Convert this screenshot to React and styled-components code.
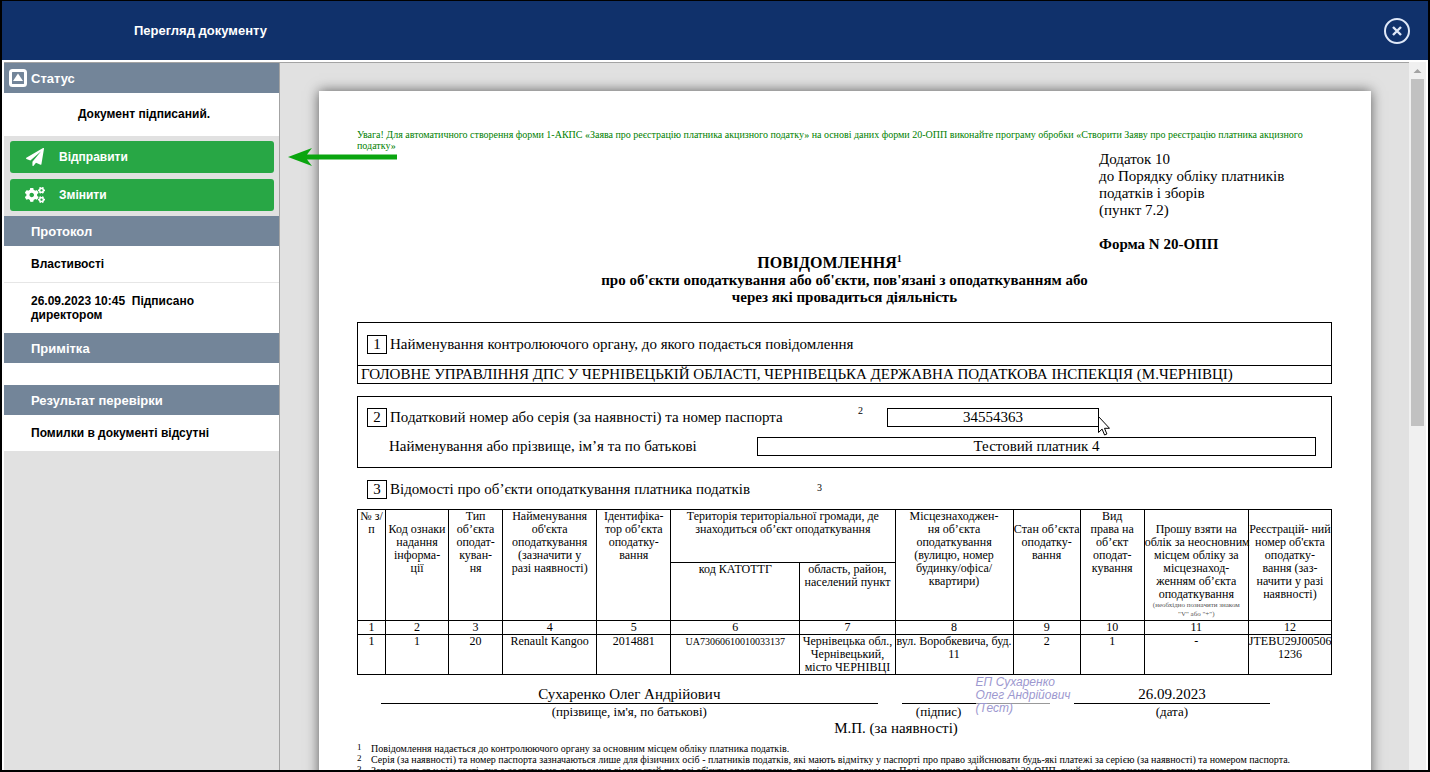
import React from 'react';
import styled, { createGlobalStyle } from 'styled-components';
import { FaCogs } from 'react-icons/fa';

const GlobalStyle = createGlobalStyle`
  * {
    box-sizing: border-box;
  }

  body {
    margin: 0;
    background: #000;
    font-family: 'Liberation Sans', Arial, sans-serif;
  }
`;

const Window = styled.div`
  display: flex;
  flex-direction: column;
  height: 100vh;
  overflow: hidden;
  border: solid #000;
  border-width: 1px 2px 2px;
  background: #fff;
`;

const Header = styled.header`
  display: flex;
  flex: none;
  align-items: center;
  justify-content: space-between;
  height: 59px;
  padding: 0 17px 0 132px;
  background: #10316b;

  h1 {
    margin: 0;
    color: #fff;
    font-size: 13px;
    font-weight: bold;
  }
`;

const CloseButton = styled.button`
  display: flex;
  padding: 0;
  border: none;
  background: none;
  cursor: pointer;
`;

const Body = styled.div`
  display: flex;
  flex: 1;
  min-height: 0;
  padding: 2px 2px 0;
`;

const Sidebar = styled.aside`
  flex: none;
  width: 276px;
  border-top: 1px solid #a3a3a3;
  border-right: 1px solid #a3a3a3;
  background: #e1e1e1;
  font-size: 12px;
  font-weight: bold;
`;

const SectionTitle = styled.h2`
  display: flex;
  align-items: center;
  gap: 4px;
  height: 30px;
  margin: 0;
  padding-left: ${(props) => (props.$icon ? '5px' : '27px')};
  background: #738599;
  color: #fff;
  font-size: 13px;
`;

const SidebarText = styled.div`
  min-height: ${(props) => (props.$empty ? '22px' : '36px')};
  padding: ${(props) => (props.$empty ? '0' : '11px 60px 11px 27px')};
  background: #fff;
  line-height: 14px;

  & + & {
    border-top: 1px solid #e6e6e6;
  }
`;

const StatusText = styled.div`
  padding: 14px 0 15px 5px;
  background: #fff;
  line-height: 14px;
  text-align: center;
`;

const Actions = styled.div`
  display: flex;
  flex-direction: column;
  gap: 6px;
  padding: 5px 5px 5px 6px;
`;

const ActionButton = styled.button`
  display: flex;
  align-items: center;
  gap: 14px;
  height: 32px;
  padding: 0 15px;
  border: none;
  border-radius: 3px;
  background: #28a745;
  color: #fff;
  font-family: inherit;
  font-size: 12px;
  font-weight: bold;
  cursor: pointer;

  svg {
    width: 20px;
    height: 18px;
  }
`;

const Viewer = styled.main`
  position: relative;
  flex: 1;
  min-width: 0;
  overflow: hidden;
  padding: 28px 38px 0 39px;
  border-top: 1px solid #a3a3a3;
  background: #e1e1e1;
`;

const PointerArrow = styled.svg`
  position: absolute;
  top: 85px;
  left: 8px;
`;

const Scrollbar = styled.div`
  flex: none;
  width: 17px;
  padding: 0 2px;
  background: #f0f0f0;

  svg {
    display: block;
    width: 13px;
    height: 17px;
  }
`;

const ScrollThumb = styled.div`
  height: 49%;
  background: #c1c1c1;
`;

const Paper = styled.article`
  min-height: 900px;
  padding: 38px 39px 0 38px;
  background: #fff;
  box-shadow: 0 0 12px rgba(0, 0, 0, 0.6);
  color: #000;
  font-family: 'Liberation Serif', 'Times New Roman', serif;
  font-size: 15px;
  line-height: 17px;
`;

const Notice = styled.p`
  margin: 0;
  color: #008000;
  font-size: 10px;
  line-height: 11px;
`;

const FormInfo = styled.div`
  width: 233px;
  margin-left: auto;

  p {
    margin: 0;
  }

  p:last-child {
    margin-top: 17px;
    font-weight: bold;
  }
`;

const Title = styled.div`
  padding-top: 1px;
  margin-bottom: 16px;
  font-weight: bold;
  text-align: center;

  h3 {
    margin: 0;
    padding-right: 30px;
    font-size: 16px;
    line-height: 18px;
  }

  p {
    margin: 0;
  }

  sup {
    font-size: 10px;
    line-height: 0;
  }
`;

const Box = styled.section`
  margin-bottom: 12px;
  border: 1px solid #000;
`;

const Row = styled.div`
  display: flex;
  align-items: center;
  gap: 3px;
  padding-left: 9px;
`;

const OfficeRow = styled(Row)`
  height: 42px;
`;

const OfficeName = styled.div`
  padding-left: 3px;
  border-top: 1px solid #000;
`;

const PayerRow = styled(Row)`
  height: 29px;
  padding-right: 15px;
`;

const Payer = styled(Box)`
  padding: 6px 0;
`;

const ObjectsRow = styled(Row)`
  padding-left: 10px;
`;

const Num = styled.span`
  flex: none;
  width: 20px;
  border: 1px solid #000;
  text-align: center;
`;

const Label = styled.span`
  flex: none;
  width: ${(props) => props.$width};
  margin-left: ${(props) => (props.$indent ? '22px' : '0')};
`;

const Ref = styled.sup`
  flex: none;
  width: 26px;
  font-size: 10px;
  line-height: 15px;
  vertical-align: baseline;
  align-self: flex-start;
`;

const Value = styled.div`
  position: relative;
  flex: ${(props) => (props.$width ? 'none' : 1)};
  width: ${(props) => props.$width};
  border: 1px solid #000;
  text-align: center;
`;

const Cursor = styled.svg`
  position: absolute;
  top: 7px;
  left: 100%;
`;

const Table = styled.table`
  width: 100%;
  margin-top: 10px;
  border-collapse: collapse;
  table-layout: fixed;
  font-size: 12px;
  line-height: 13px;
  text-align: center;

  th,
  td {
    padding: 0;
    border: 1px solid #000;
    font-weight: normal;
    vertical-align: top;
    white-space: pre;
  }

  small {
    display: block;
    color: #555;
    font-size: 7px;
    line-height: 9px;
  }
`;

const HeadRow = styled.tr`
  height: ${(props) => props.$height};
`;

const Code = styled.span`
  font-size: 10px;
`;

const Signatures = styled.div`
  display: flex;
  gap: 24px;
  padding: 11px 62px 0 24px;
`;

const Signature = styled.div`
  position: relative;
  flex: ${(props) => props.$grow};
  font-size: 13px;
  line-height: 15px;
  text-align: center;

  div {
    height: 18px;
    border-bottom: 1px solid #000;
    font-size: 15px;
    line-height: 17px;
  }
`;

const SignLabel = styled.span`
  display: block;
  width: 50%;
`;

const Stamp = styled.p`
  position: absolute;
  top: -10px;
  left: 74px;
  margin: 0;
  background: rgba(255, 255, 255, 0.6);
  color: #9d98cf;
  font-family: 'Liberation Sans', Arial, sans-serif;
  font-size: 12px;
  font-style: italic;
  line-height: 13px;
  text-align: left;
  white-space: pre;
`;

const Seal = styled.p`
  margin: 1px 0 6px;
  padding-left: 103px;
  text-align: center;
`;

const Footnotes = styled.ol`
  margin: 0;
  padding: 0;
  font-size: 10px;
  line-height: 11px;
  list-style: none;

  li {
    display: flex;
    white-space: nowrap;
  }

  sup {
    width: 14px;
    font-size: 9px;
    line-height: 9px;
  }
`;

const columns = [28, 63, 54, 94, 74, 129, 95, 118, 67, 64, 104, 83];

const headBefore = [
  '№ з/\nп',
  '\nКод ознаки\nнадання\nінформа-\nції',
  'Тип\nоб’єкта\nоподат-\nкуван-\nня',
  "Найменування\nоб'єкта\nоподаткування\n(зазначити у\nразі наявності)",
  'Ідентифіка-\nтор об’єкта\nоподатку-\nвання',
];

const headAfter = [
  'Місцезнаходжен-\nня об’єкта\nоподаткування\n(вулицю, номер\nбудинку/офіса/\nквартири)',
  '\nСтан об’єкта\nоподатку-\nвання',
  'Вид\nправа на\nоб’єкт\nоподат-\nкування',
];

const footnotes = [
  'Повідомлення надається до контролюючого органу за основним місцем обліку платника податків.',
  'Серія (за наявності) та номер паспорта зазначаються лише для фізичних осіб - платників податків, які мають відмітку у паспорті про право здійснювати будь-які платежі за серією (за наявності) та номером паспорта.',
  "Заповнюється у кількості, яка є достатньою для надання відомостей про всі об'єкти оподаткування, та згідно з порядком до Повідомлення за формою N 20-ОПП, який до контролюючого органу не подається.",
];

function StatusSidebar() {
  return (
    <Sidebar>
      <SectionTitle $icon>
        <svg width='18' height='18' viewBox='0 0 18 18'>
          <rect x='1.5' y='1.5' width='15' height='15' rx='2' fill='none' stroke='#fff' strokeWidth='3' />
          <path d='M9 4.5 14 12H4z' fill='#fff' />
        </svg>
        Статус
      </SectionTitle>
      <StatusText>Документ підписаний.</StatusText>
      <Actions>
        <ActionButton type='button'>
          <svg viewBox='0 0 1792 1792' fill='currentColor'>
            <path d='M1764 11q33 24 27 64l-256 1536q-5 29-32 45-14 8-31 8-11 0-24-5l-453-185-242 295q-18 23-49 23-13 0-22-4-19-7-30.500-23.500t-11.500-36.500v-349l864-1059-1069 925-395-162q-37-14-40-55-2-40 32-59l1664-960q15-9 32-9 20 0 36 11z' />
          </svg>
          Відправити
        </ActionButton>
        <ActionButton type='button'>
          <FaCogs />
          Змінити
        </ActionButton>
      </Actions>
      <SectionTitle>Протокол</SectionTitle>
      <SidebarText>Властивості</SidebarText>
      <SidebarText>26.09.2023 10:45&nbsp; Підписано директором</SidebarText>
      <SectionTitle>Примітка</SectionTitle>
      <SidebarText $empty />
      <SectionTitle>Результат перевірки</SectionTitle>
      <SidebarText>Помилки в документі відсутні</SidebarText>
    </Sidebar>
  );
}

function ObjectsTable() {
  return (
    <Table>
      <colgroup>
        {columns.map((width, i) => (
          <col key={i} width={width} />
        ))}
      </colgroup>
      <thead>
        <HeadRow $height='53px'>
          {headBefore.map((text) => (
            <th key={text} rowSpan={2}>
              {text}
            </th>
          ))}
          <th colSpan={2}>{'Територія територіальної громади, де\nзнаходиться об’єкт оподаткування'}</th>
          {headAfter.map((text) => (
            <th key={text} rowSpan={2}>
              {text}
            </th>
          ))}
          <th rowSpan={2}>
            {'\nПрошу взяти на\nоблік за неосновним\nмісцем обліку за\nмісцезнаход-\nженням об’єкта\nоподаткування'}
            <small>{'(необхідно позначити знаком\n"V" або "+")'}</small>
          </th>
          <th rowSpan={2}>{"\nРеєстрацій- ний\nномер об'єкта\nоподатку-\nвання (заз-\nначити у разі\nнаявності)"}</th>
        </HeadRow>
        <HeadRow $height='58px'>
          <th>код КАТОТТГ</th>
          <th>{'область, район,\nнаселений пункт'}</th>
        </HeadRow>
        <tr>
          {columns.map((width, i) => (
            <th key={i}>{i + 1}</th>
          ))}
        </tr>
      </thead>
      <tbody>
        <tr>
          <td>1</td>
          <td>1</td>
          <td>20</td>
          <td>Renault Kangoo</td>
          <td>2014881</td>
          <td>
            <Code>UA73060610010033137</Code>
          </td>
          <td>{'Чернівецька обл.,\nЧернівецький,\nмісто ЧЕРНІВЦІ'}</td>
          <td>{'вул. Воробкевича, буд.\n11'}</td>
          <td>2</td>
          <td>1</td>
          <td>-</td>
          <td>{'JTEBU29J00506\n1236'}</td>
        </tr>
      </tbody>
    </Table>
  );
}

function FormDocument() {
  return (
    <Paper>
      <Notice>
        Увага! Для автоматичного створення форми 1-АКПС «Заява про реєстрацію платника акцизного податку» на основі
        даних форми 20-ОПП виконайте програму обробки «Створити Заяву про реєстрацію платника акцизного податку»
      </Notice>
      <FormInfo>
        <p>Додаток 10</p>
        <p>до Порядку обліку платників</p>
        <p>податків і зборів</p>
        <p>(пункт 7.2)</p>
        <p>Форма N 20-ОПП</p>
      </FormInfo>
      <Title>
        <h3>
          ПОВІДОМЛЕННЯ<sup>1</sup>
        </h3>
        <p>про об'єкти оподаткування або об'єкти, пов'язані з оподаткуванням або</p>
        <p>через які провадиться діяльність</p>
      </Title>
      <Box>
        <OfficeRow>
          <Num>1</Num>
          Найменування контролюючого органу, до якого подається повідомлення
        </OfficeRow>
        <OfficeName>
          ГОЛОВНЕ УПРАВЛІННЯ ДПС У ЧЕРНІВЕЦЬКІЙ ОБЛАСТІ, ЧЕРНІВЕЦЬКА ДЕРЖАВНА ПОДАТКОВА ІНСПЕКЦІЯ (М.ЧЕРНІВЦІ)
        </OfficeName>
      </Box>
      <Payer>
        <PayerRow>
          <Num>2</Num>
          <Label $width='465px'>Податковий номер або серія (за наявності) та номер паспорта</Label>
          <Ref>2</Ref>
          <Value $width='212px'>
            34554363
            <Cursor width='12' height='20' viewBox='0 0 12 20'>
              <path d='M.5.5v16l3.6-3.4 2.5 5.9 2.3-1-2.4-5.7h5z' fill='#fff' stroke='#000' />
            </Cursor>
          </Value>
        </PayerRow>
        <PayerRow>
          <Label $indent $width='365px'>
            Найменування або прізвище, ім’я та по батькові
          </Label>
          <Value>Тестовий платник 4</Value>
        </PayerRow>
      </Payer>
      <ObjectsRow>
        <Num>3</Num>
        <Label $width='424px'>Відомості про об’єкти оподаткування платника податків</Label>
        <Ref>3</Ref>
      </ObjectsRow>
      <ObjectsTable />
      <Signatures>
        <Signature $grow={496}>
          <div>Сухаренко Олег Андрійович</div>
          (прізвище, ім'я, по батькові)
        </Signature>
        <Signature $grow={148}>
          <div />
          <SignLabel>(підпис)</SignLabel>
          <Stamp>{'ЕП Сухаренко\nОлег Андрійович\n(Тест)'}</Stamp>
        </Signature>
        <Signature $grow={196}>
          <div>26.09.2023</div>
          (дата)
        </Signature>
      </Signatures>
      <Seal>М.П. (за наявності)</Seal>
      <Footnotes>
        {footnotes.map((text, i) => (
          <li key={text}>
            <sup>{i + 1}</sup>
            {text}
          </li>
        ))}
      </Footnotes>
    </Paper>
  );
}

function App() {
  return (
    <Window>
      <GlobalStyle />
      <Header>
        <h1>Перегляд документу</h1>
        <CloseButton type='button' aria-label='Закрити'>
          <svg width='28' height='28' viewBox='0 0 28 28' fill='none' stroke='#dfe8f8' strokeWidth='2'>
            <circle cx='14' cy='14' r='12' />
            <path d='M10 10l8 8M18 10l-8 8' strokeWidth='2.4' />
          </svg>
        </CloseButton>
      </Header>
      <Body>
        <StatusSidebar />
        <Viewer>
          <FormDocument />
          <PointerArrow width='110' height='18' viewBox='0 0 110 18'>
            <path d='M0 9 24 0l-5 6.500H109v5H19L24 18z' fill='#0aa50f' />
          </PointerArrow>
        </Viewer>
        <Scrollbar>
          <svg viewBox='0 0 13 17'>
            <path d='M2.500 11 6.500 7l4 4z' fill='#a3a3a3' />
          </svg>
          <ScrollThumb />
        </Scrollbar>
      </Body>
    </Window>
  );
}

export default App;
